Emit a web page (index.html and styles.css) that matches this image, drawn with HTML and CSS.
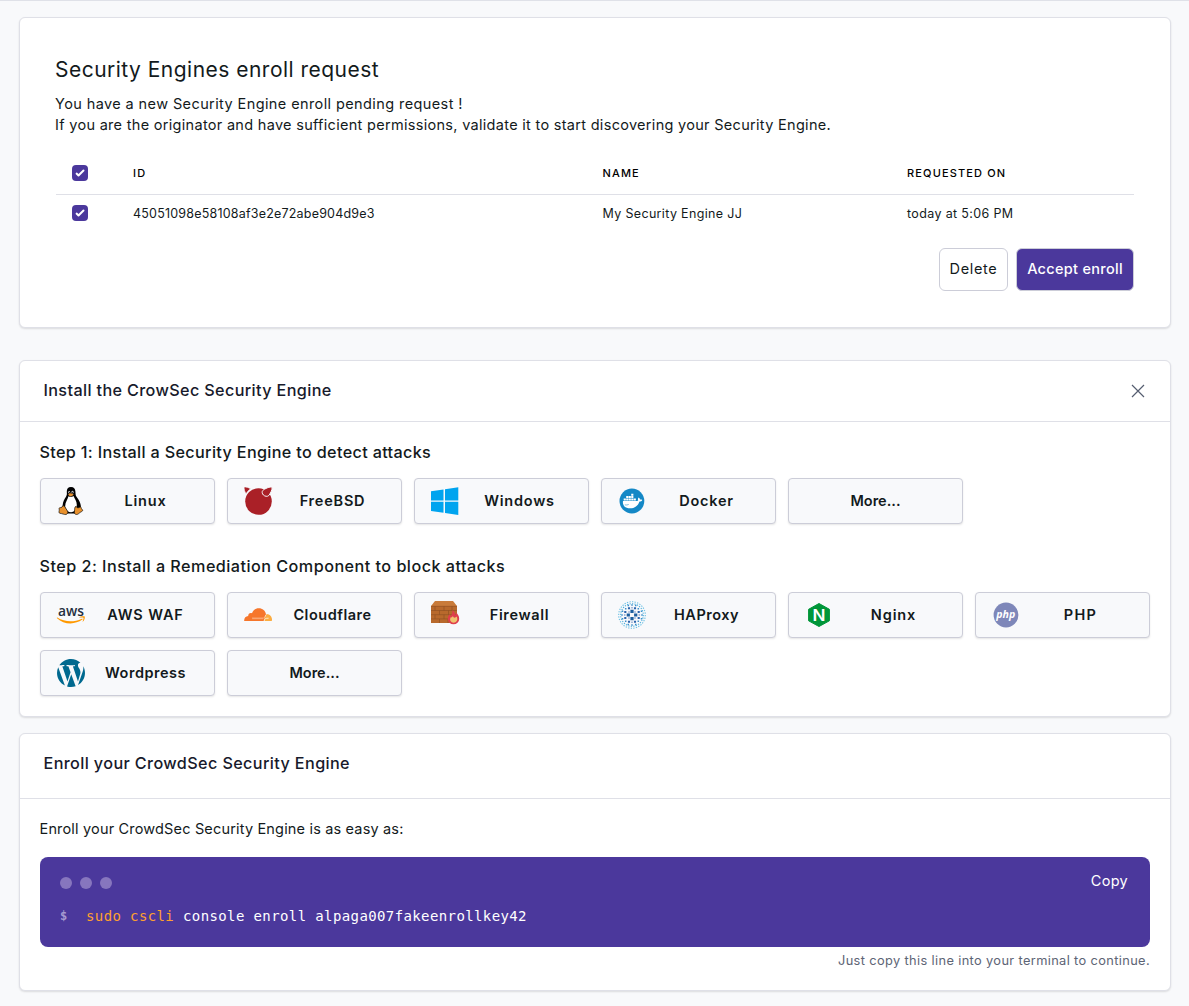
FILE: index.html
```html
<!DOCTYPE html>
<html lang="en">
<head>
<meta charset="utf-8">
<title>Security Engines</title>
<link rel="stylesheet" href="styles.css">
</head>
<body>
<main class="page">
  <section class="card request">
    <h1 class="request-title">Security Engines enroll request</h1>
    <p class="request-text"><span class="line-a">You have a new Security Engine enroll pending request !</span><br><span class="line-b">If you are the originator and have sufficient permissions, validate it to start discovering your Security Engine.</span></p>
    <div class="table">
      <div class="row row-head">
        <span class="check"><svg viewBox="0 0 16 16"><path d="M12.2 4.8a1 1 0 0 1 0 1.4l-5 5a1 1 0 0 1-1.4 0l-2-2a1 1 0 0 1 1.4-1.4l1.3 1.3 4.3-4.3a1 1 0 0 1 1.4 0z"/></svg></span>
        <span>ID</span><span>NAME</span><span>REQUESTED ON</span>
      </div>
      <div class="row row-body">
        <span class="check"><svg viewBox="0 0 16 16"><path d="M12.2 4.8a1 1 0 0 1 0 1.4l-5 5a1 1 0 0 1-1.4 0l-2-2a1 1 0 0 1 1.4-1.4l1.3 1.3 4.3-4.3a1 1 0 0 1 1.4 0z"/></svg></span>
        <span class="c-id">45051098e58108af3e2e72abe904d9e3</span><span class="c-name">My Security Engine JJ</span><span class="c-date">today at 5:06 PM</span>
      </div>
    </div>
    <div class="actions">
      <button class="btn btn-delete">Delete</button>
      <button class="btn btn-accept">Accept enroll</button>
    </div>
  </section>

  <section class="card install">
    <header class="card-head">
      <h2 class="install-title">Install the CrowSec Security Engine</h2>
      <svg class="close" viewBox="0 0 14 14"><path d="M1 1l12 12M13 1L1 13"/></svg>
    </header>
    <div class="card-body">
      <h3 class="step step-one">Step 1: Install a Security Engine to detect attacks</h3>
      <div class="grid">
        <a class="tile"><svg class="icon" viewBox="0 0 28 28">
          <path fill="#000" d="M14 0c-3 0-4.200 2-4.200 4.600 0 2.300.4 3.200-.8 5.100-1.500 2.400-3.200 5-3.300 8.200-.1 1.300-.8 1.700-1.400 2.800L8 26.500h11.500l4.500-5.700c0-1.200-.2-2.500-.7-4.300-.7-2.600-2.200-4.400-3.600-6.500-1.400-2-1-3-1.300-5.500C18.100 1.700 17 0 14 0z"/>
          <path fill="#fff" d="M11.500 9.200c1.600 1 3.500.8 5-.3 1.100 2.500 3.300 5.200 3.300 8.900 0 3.300-1.800 7.200-5.600 7.400-3.500.1-6-2.600-6-6.200 0-3.800 2.500-6.700 3.300-9.800z"/>
          <ellipse cx="12.200" cy="5.300" rx="1" ry="1.300" fill="#bbb"/><ellipse cx="15.500" cy="5.200" rx="1.100" ry="1.400" fill="#bbb"/><circle cx="12.500" cy="5.600" r=".6"/><circle cx="15.300" cy="5.600" r=".6"/>
          <path fill="#e8912d" d="M11.200 7.600c.8-.9 1.700-1.400 2.600-1.300 1 .1 2 .6 2.900 1.300-.9.900-2 1.700-3.200 1.700-.9 0-1.700-.8-2.300-1.700z"/>
          <path fill="#e8912d" stroke="#111" stroke-width=".7" d="M2.500 20.800c1-.3 2.200 0 2.800-1.300.8-1.200 2-.5 2.700.6l2.600 4.100c.7 1.400-.1 3-1.700 3.300-1.700.2-3.500-.9-5.900-1.200-1.300-.2-1.100-1.500-.8-2.700.2-1.100-.5-2.400.3-2.800zM19 19.300c.5 1.600 2.900 2.200 4.200.4 1.200.1.700 1.700 1.800 2.600 1.600 1.300.2 2-1.200 2.700-1.600.9-2.500 2.500-4.300 2.500-2 0-2.300-1.600-2-3.300.2-1.600-.1-4.500 1.500-4.900z"/>
        </svg><span class="label t-linux">Linux</span></a>
        <a class="tile"><svg class="icon" viewBox="0 0 28 28">
          <circle cx="14.500" cy="14.500" r="13.300" fill="#aa2027"/>
          <path fill="#aa2027" stroke="#f8f9fb" stroke-width=".7" d="M0 0c2-.4 4.700.5 6.700 1.800-2 1.400-3.500 3-4.600 5C.8 5 0 2.500 0 0z"/>
          <path fill="#aa2027" stroke="#f8f9fb" stroke-width="1" d="M28 .3c.8 2-2.200 7.100-3.200 8.200-1.300 1.400-4 .9-5.400-.5-1.400-1.400-1.700-3.300-.5-4.600C20.400 1.800 26.500-.8 28 .3z"/>
        </svg><span class="label t-freebsd">FreeBSD</span></a>
        <a class="tile"><svg class="icon" viewBox="0 0 28 28"><path fill="#00a4ef" d="M0 4.300l12.500-1.800v11.100H0zM14 2.200L27.300.2v13.400H14zM0 14.700h12.500v11L0 23.900zM14 14.700h13.300V28L14 26z"/></svg><span class="label t-windows">Windows</span></a>
        <a class="tile"><svg class="icon" viewBox="0 0 28 28">
          <circle cx="13.900" cy="14" r="12.400" fill="#1488c6"/>
          <g transform="translate(.3 2.500) scale(.93 .88)">
          <path fill="#fff" d="M5 13h15.200c.4 0 .9-.2 1.200-.5-.5-1.100-.4-2.400.4-3.300.9.500 1.400 1.300 1.500 2.200.9-.2 1.700-.1 2.500.4-.5 1.200-1.600 1.700-3 1.700-1.600 4.900-5.200 7.800-10.100 7.800-5.300 0-8.300-3-7.700-8.300z"/>
          <path fill="#fff" d="M5.800 10.200h2.300v2.300H5.800zM8.500 10.200h2.300v2.300H8.500zM11.200 10.200h2.300v2.300h-2.300zM13.900 10.200h2.300v2.300h-2.300zM16.600 10.200h2.300v2.300h-2.300zM8.500 7.500h2.300v2.300H8.500zM11.200 7.500h2.300v2.300h-2.300zM13.900 7.500h2.300v2.300h-2.300zM13.900 4.900h2.300v2.200h-2.300z"/>
          <path d="M7 17.500c1.500.3 3 .1 4.200-.5" fill="none" stroke="#1488c6" stroke-width=".6"/>
          </g>
        </svg><span class="label t-docker">Docker</span></a>
        <a class="tile tile-more"><span>More...</span></a>
      </div>

      <h3 class="step step-two">Step 2: Install a Remediation Component to block attacks</h3>
      <div class="grid">
        <a class="tile"><svg class="icon" viewBox="0 0 28 28">
          <text class="aws" x=".9" y="14.500" textLength="26" lengthAdjust="spacingAndGlyphs">aws</text>
          <path fill="#f90" d="M.3 16.500c7.500 4.700 16.300 5 24.500 1.200.7-.3 1.200.4.500.9C18 24 7 23.800 0 17.200c-.3-.4 0-.9.3-.7z"/>
          <path fill="#f90" d="M22.300 16.200c1.500-1 4.900-1.200 5.400-.6.500.7-.4 4-1.700 5-.3.200-.6.100-.4-.2.500-1.100 1.200-3.100.9-3.600-.4-.5-2.700-.3-3.900-.2-.4 0-.6-.2-.3-.4z"/>
        </svg><span class="label t-aws">AWS WAF</span></a>
        <a class="tile"><svg class="icon" viewBox="0 0 28 28">
          <path fill="#fbad41" d="M22.700 13c3.100.1 5.200 2.600 5.300 5.600 0 .9-.1 1.500-.6 1.500H19z"/>
          <path fill="#f6762b" d="M.2 20.100c-.3-3 1.400-5.100 4-5.200-.1-2.200 1.800-3.500 3.800-2.700C9.100 9 11.700 7.200 14.800 7.200c3.700 0 6.700 2.500 7.200 6.200-1.100.8-1.300 2.300-1.600 4l-.7 2.700z"/>
          <path d="M8 17h11.200c1.200 0 1.500-.6 1.800-1.600M8.200 17.700h11" fill="none" stroke="#fbb98d" stroke-width=".7"/>
          <path d="M20.200 20.200c.2-1.900.8-2.800 2.400-2.900l2-.1" fill="none" stroke="#fff" stroke-width=".7"/>
        </svg><span class="label t-cloudflare">Cloudflare</span></a>
        <a class="tile"><svg class="icon" viewBox="0 0 28 28">
          <path fill="#c97b3a" d="M4 0h18l4 5H0z"/><path fill="#b8692c" d="M0 5h26v17H0z"/>
          <path d="M0 5.300h26M0 9.500h26M0 13.700h26M0 17.900h26M4 5.300v4.200M13 5.300v4.200M21 5.300v4.200M8.500 9.500v4.200M17.500 9.500v4.200M4 13.700v4.200M13 13.700v4.200M8.500 17.900V22M17 17.900V22" stroke="#8d4f22" stroke-width=".6"/>
          <path fill="#df3e4d" d="M21.500 9c2 1.600 2.500 3.400 2.800 5.100.8-.6.9-1.700.9-2.500 1.900 1.800 3 4 3 6.300a5.700 5.300 0 0 1-11.400 0c0-2 .9-3.400 1.900-4.700.1 1 .5 1.600 1.200 2 .8-1.900 2-3.500 1.600-6.200z"/>
          <path fill="#efc36e" d="M21.800 14.800c.5 1.500 1.300 2.300 2.400 1.800.8-.3 1.200-.6 1.500-1 .6 1.500.9 2.900.2 4.200-1.300 2.500-5.200 2.500-6.500 0-.6-1.300-.1-2.700.6-3.700.5.900 1.500.1 1.800-1.300z"/>
        </svg><span class="label t-firewall">Firewall</span></a>
        <a class="tile"><svg class="icon" viewBox="-14 -14 28 28" fill="none" stroke-linecap="square">
          <path stroke="#1d5f9f" stroke-width="3.200" d="M0-3.700h.01M3.700 0h.01M0 3.700h.01M-3.700 0h.01"/>
          <path stroke="#2b64ad" stroke-width="2.100" d="M-3-6.700h.01M3-6.700h.01M-3 6.700h.01M3 6.700h.01M-6.700-3h.01M-6.700 3h.01M6.700-3h.01M6.700 3h.01"/>
          <path stroke="#8fa6cf" stroke-width="1.500" d="M-3-3h.01M3-3h.01M-3 3h.01M3 3h.01M0-7.300h.01M0 7.300h.01M-7.300 0h.01M7.300 0h.01"/>
          <path stroke="#3f8fca" stroke-width="1.500" d="M0-10h.01M0 10h.01M-10 0h.01M10 0h.01M-6.300-6.300h.01M6.300-6.300h.01M-6.300 6.300h.01M6.300 6.300h.01M-3.700-9.500h.01M3.700-9.500h.01M-3.700 9.500h.01M3.700 9.500h.01M-9.500-3.700h.01M-9.500 3.700h.01M9.500-3.700h.01M9.500 3.700h.01"/>
          <circle r="11.300" pathLength="56" stroke="#4fb0dc" stroke-width="1.100" stroke-linecap="butt" stroke-dasharray="1 1"/>
          <circle r="13.300" pathLength="64" stroke="#6cc0e4" stroke-width="1.100" stroke-linecap="butt" stroke-dasharray="1 1"/>
        </svg><span class="label t-haproxy">HAProxy</span></a>
        <a class="tile"><svg class="icon" viewBox="0 0 28 28">
          <path fill="#009639" stroke="#009639" stroke-linejoin="round" d="M14 2.500l10.400 5.800v11.500L14 25.500 3.600 19.800V8.300z"/>
          <text class="nginx" x="7.500" y="19.800" textLength="13" lengthAdjust="spacingAndGlyphs">N</text>
        </svg><span class="label t-nginx">Nginx</span></a>
        <a class="tile"><svg class="icon" viewBox="0 0 28 28"><circle cx="14" cy="14" r="12.400" fill="#7e87b9"/><text class="php" x="4.300" y="17.200" textLength="19" lengthAdjust="spacingAndGlyphs">php</text></svg><span class="label t-php">PHP</span></a>
        <a class="tile"><svg class="icon" viewBox="1.200 1.200 21.600 21.600"><path fill="#00698f" d="M21.469 6.825c.84 1.537 1.318 3.300 1.318 5.175 0 3.979-2.156 7.456-5.363 9.325l3.295-9.527c.615-1.540.82-2.771.82-3.864 0-.405-.026-.78-.07-1.110m-7.981.105c.647-.03 1.232-.105 1.232-.105.582-.075.514-.93-.067-.899 0 0-1.755.135-2.880.135-1.064 0-2.850-.15-2.850-.15-.585-.03-.661.855-.075.885 0 0 .54.061 1.125.09l1.680 4.605-2.370 7.080L5.354 6.900c.649-.03 1.234-.1 1.234-.1.585-.075.516-.93-.065-.896 0 0-1.746.138-2.874.138-.2 0-.438-.008-.69-.015C4.911 3.150 8.235 1.215 12 1.215c2.809 0 5.365 1.072 7.286 2.833-.046-.003-.091-.009-.141-.009-1.060 0-1.812.923-1.812 1.914 0 .89.513 1.643 1.060 2.531.411.72.89 1.643.89 2.977 0 .915-.354 1.994-.821 3.479l-1.075 3.585-3.900-11.610.001.014zM12 22.784c-1.059 0-2.081-.153-3.048-.437l3.237-9.406 3.315 9.087c.024.053.05.101.078.149-1.120.393-2.325.609-3.582.609M1.211 12c0-1.564.336-3.050.935-4.390L7.290 21.709C3.694 19.960 1.212 16.271 1.211 12"/></svg><span class="label t-wordpress">Wordpress</span></a>
        <a class="tile tile-more"><span>More...</span></a>
      </div>
    </div>
  </section>

  <section class="card enroll">
    <header class="card-head">
      <h2 class="enroll-title">Enroll your CrowdSec Security Engine</h2>
    </header>
    <div class="card-body">
      <p class="enroll-text">Enroll your CrowdSec Security Engine is as easy as:</p>
      <div class="terminal">
        <div class="terminal-bar"><span class="dots"><i></i><i></i><i></i></span><span class="copy">Copy</span></div>
        <div class="command"><span class="prompt">$</span><code><span class="cmd">sudo cscli</span> console enroll alpaga007fakeenrollkey42</code></div>
      </div>
      <p class="hint">Just copy this line into your terminal to continue.</p>
    </div>
  </section>
</main>
</body>
</html>
```
FILE: styles.css
```css
* { box-sizing: border-box; }
body {
  margin: 0;
  background: #f8f9fb;
  border-top: 1px solid #dfe1e8;
  color: #131a1c;
  font: 14.5px/21px Inter, "Open Sans", sans-serif;
}
h1, h2, h3, p { margin: 0; }
.page { padding: 16px 18px 15px 19px; display: flex; flex-direction: column; }
.card {
  background: #fff;
  border: 1px solid #dfe0e7;
  border-radius: 6px;
  box-shadow: 0 1px 2px rgba(0, 0, 0, .12);
}

.request { height: 311px; padding: 36px; margin-bottom: 32px; }
.request-title { margin-left: -1px; font-size: 21px; line-height: 31px; font-weight: 400; letter-spacing: .48px; }
.request-text { margin: 8px 0 0 -1px; white-space: nowrap; }
.line-a { letter-spacing: .4px; }
.line-b { letter-spacing: .3px; }
.table { margin-top: 17px; }
.row { display: grid; grid-template-columns: 77px 469.5px 304.5px 1fr; align-items: center; }
.row-head { height: 43px; border-bottom: 1px solid #dfe0e7; font-size: 11px; font-weight: 550; letter-spacing: 1.15px; color: #000; }
.row-body { height: 37px; padding-bottom: 1px; font-size: 12.5px; }
.c-id { letter-spacing: .2px; }
.c-name { letter-spacing: .34px; }
.c-date { letter-spacing: .36px; }
.check { width: 16px; height: 16px; margin-left: 16px; border-radius: 4px; background: #4b389c; }
.check svg { display: block; width: 16px; height: 16px; fill: #fff; }
.actions { display: flex; justify-content: flex-end; gap: 8px; margin-top: 16px; }
.btn {
  height: 43px; padding: 0 0 2px; border: 1px solid #cccdd8; border-radius: 6px;
  background: #fff; color: #131a1c; font: inherit;
}
.btn-delete { width: 69px; letter-spacing: .65px; }
.btn-accept { width: 118px; background: #4b389c; color: #fff; font-weight: 450; letter-spacing: .3px; }

.card-head { display: flex; justify-content: space-between; padding: 19px 25px 0 23.5px; border-bottom: 1px solid #dfe0e7; }
.card-head h2 { font-size: 16.2px; line-height: 21px; font-weight: 500; color: #171a2b; }
.card-head .install-title { letter-spacing: .36px; }
.card-head .enroll-title { letter-spacing: .38px; }
.install { height: 357px; margin-bottom: 16px; }
.install .card-head { height: 61px; }
.close { width: 14px; height: 14px; margin-top: 4px; fill: none; stroke: #555d70; stroke-width: 1.2; }
.card-body { padding: 20px 20px 0; }
.step { margin: 0 0 16px -.5px; font-size: 16.2px; line-height: 20px; font-weight: 500; letter-spacing: .335px; }
.grid { display: grid; grid-template-columns: repeat(6, 175px); gap: 12px; }
.step-two { margin-top: 32px; letter-spacing: .465px; }
.tile {
  height: 46px; padding: 0 16px; display: flex; align-items: center;
  background: #f8f9fb; border: 1px solid #cccdd8; border-radius: 4px;
  box-shadow: 0 1px 2px rgba(0, 0, 0, .1); font-size: 14.5px; font-weight: 600;
}
.tile-more { justify-content: center; padding-bottom: 2px; }
.icon { width: 28px; height: 28px; flex: none; overflow: visible; }
.label { flex: 1; margin-left: 7px; padding: 0 0 2px 1px; text-align: center; white-space: nowrap; }
.t-linux, .t-freebsd, .t-windows, .t-docker { letter-spacing: .78px; }
.t-aws { letter-spacing: .9px; }
.t-cloudflare { letter-spacing: .52px; }
.t-firewall { letter-spacing: .68px; }
.t-haproxy { letter-spacing: .48px; }
.t-nginx { letter-spacing: .9px; }
.t-php { letter-spacing: 1.3px; }
.t-wordpress { letter-spacing: .5px; }
.aws { font: 600 14.5px "Open Sans", sans-serif; fill: #252f3e; }
.nginx { font: 600 16px Inter, sans-serif; fill: #fff; }
.php { font: italic 700 11px "Open Sans", sans-serif; fill: #fff; }

.enroll { height: 258px; }
.enroll .card-head { height: 65px; }
.enroll .card-body { padding-top: 19px; }
.enroll-text { margin-left: -.5px; letter-spacing: .17px; }
.terminal { height: 90px; margin-top: 18px; padding: 13px 22px 0 20px; border-radius: 8px; background: #4b389c; color: #fff; }
.terminal-bar { display: flex; justify-content: space-between; }
.copy { letter-spacing: .3px; }
.dots { display: flex; gap: 8px; padding-top: 7px; }
.dots i { width: 12px; height: 12px; border-radius: 50%; background: #8776be; }
.command { display: flex; margin-top: 15px; font-family: "DejaVu Sans Mono", monospace; font-size: 14px; }
.prompt { width: 26px; font-size: 12px; font-weight: 700; color: #a79bd0; }
.command code { font: inherit; letter-spacing: .39px; white-space: pre; }
.cmd { color: #ffa02e; }
.hint { margin-top: 3px; text-align: right; font-size: 12.8px; letter-spacing: .37px; color: #5d6475; }
```
